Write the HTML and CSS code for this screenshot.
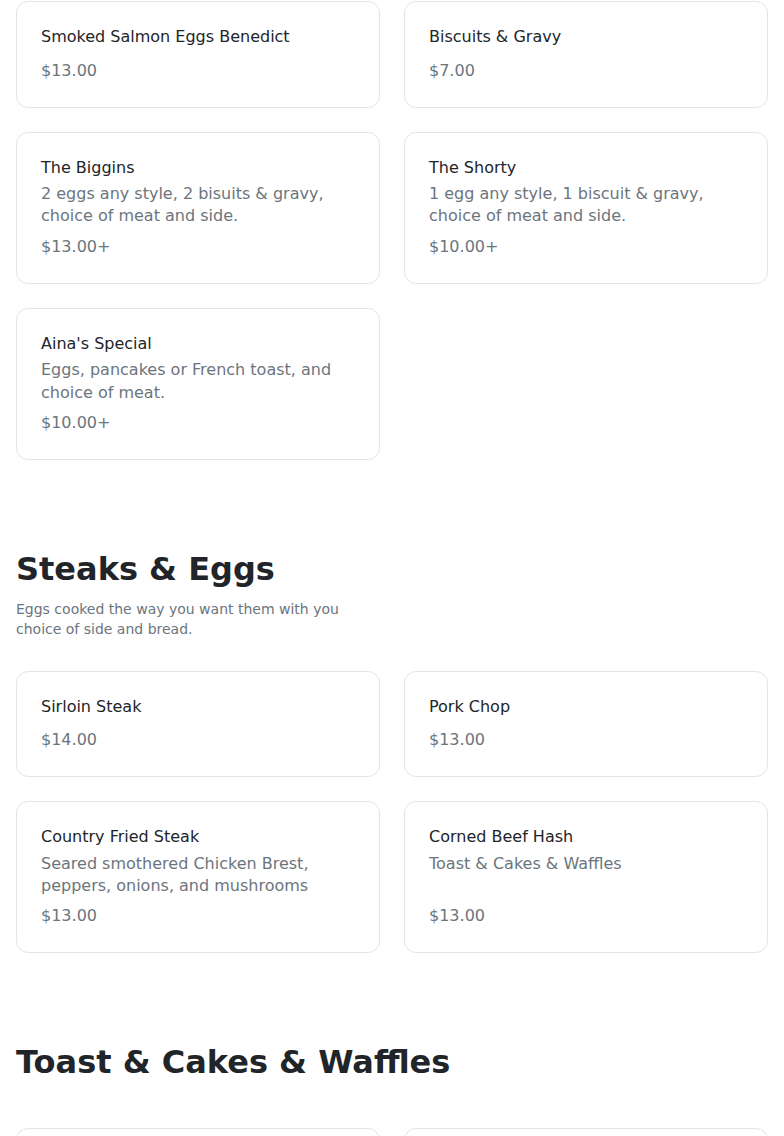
FILE: index.html
```html
<!DOCTYPE html>
<html lang="en">
<head>
    <meta charset="UTF-8">
    <meta name="viewport" content="width=device-width, initial-scale=1.0">
    <link rel="stylesheet" href="styles.css">
    <title>Menu</title>
</head>
<body>
    <div class="menu">
        <section class="section section-first">
            <div class="items">
                <div class="item">
                    <h5 class="item-name">Smoked Salmon Eggs Benedict</h5>
                    <p class="item-desc"></p>
                    <span class="item-price">$13.00</span>
                </div>
                <div class="item">
                    <h5 class="item-name">Biscuits &amp; Gravy</h5>
                    <p class="item-desc"></p>
                    <span class="item-price">$7.00</span>
                </div>
                <div class="item">
                    <h5 class="item-name">The Biggins</h5>
                    <p class="item-desc">2 eggs any style, 2 bisuits &amp; gravy, choice of meat and side.</p>
                    <span class="item-price">$13.00+</span>
                </div>
                <div class="item">
                    <h5 class="item-name">The Shorty</h5>
                    <p class="item-desc">1 egg any style, 1 biscuit &amp; gravy, choice of meat and side.</p>
                    <span class="item-price">$10.00+</span>
                </div>
                <div class="item">
                    <h5 class="item-name">Aina's Special</h5>
                    <p class="item-desc">Eggs, pancakes or French toast, and choice of meat.</p>
                    <span class="item-price">$10.00+</span>
                </div>
            </div>
        </section>

        <section class="section">
            <h2 class="section-title">Steaks &amp; Eggs</h2>
            <p class="section-desc">Eggs cooked the way you want them with you choice of side and bread.</p>
            <div class="items">
                <div class="item">
                    <h5 class="item-name">Sirloin Steak</h5>
                    <p class="item-desc"></p>
                    <span class="item-price">$14.00</span>
                </div>
                <div class="item">
                    <h5 class="item-name">Pork Chop</h5>
                    <p class="item-desc"></p>
                    <span class="item-price">$13.00</span>
                </div>
                <div class="item">
                    <h5 class="item-name">Country Fried Steak</h5>
                    <p class="item-desc">Seared smothered Chicken Brest, peppers, onions, and mushrooms</p>
                    <span class="item-price">$13.00</span>
                </div>
                <div class="item">
                    <h5 class="item-name">Corned Beef Hash</h5>
                    <p class="item-desc">Toast &amp; Cakes &amp; Waffles</p>
                    <span class="item-price">$13.00</span>
                </div>
            </div>
        </section>

        <section class="section">
            <h2 class="section-title">Toast &amp; Cakes &amp; Waffles</h2>
            <p class="section-desc"></p>
            <div class="items">
                <div class="item">
                    <h5 class="item-name">French Toast</h5>
                    <p class="item-desc"></p>
                    <span class="item-price">$9.00</span>
                </div>
                <div class="item">
                    <h5 class="item-name">Pancakes</h5>
                    <p class="item-desc"></p>
                    <span class="item-price">$8.00</span>
                </div>
            </div>
        </section>
    </div>
</body>
</html>
```

FILE: styles.css
```css
body {
    margin: 0;
    background-color: #fff;
    color: #212529;
    font-family: "DejaVu Sans", sans-serif;
    font-size: 16px;
}

.menu {
    padding: 1px 16px 40px;
}

.section {
    display: flex;
    flex-direction: column;
    padding-top: 90px;
}

.section-first {
    padding-top: 0;
}

.section-title {
    margin: 0 0 10px;
    font-size: 32px;
    font-weight: 700;
    line-height: 1.2;
    color: #212529;
}

.section-desc {
    max-width: 364px;
    margin: 0 0 32px;
    font-size: 14px;
    line-height: 20px;
    color: #6c757d;
}

.section-desc:empty {
    margin-bottom: 36px;
}

.items {
    display: grid;
    grid-template-columns: 1fr 1fr;
    gap: 24px;
}

.item {
    display: flex;
    flex-direction: column;
    border: 1px solid #e3e5e8;
    border-radius: 12px;
    padding: 24px;
    background-color: #fff;
}

.item-name {
    margin: 0;
    font-size: 16px;
    font-weight: 400;
    line-height: 21px;
    color: #212529;
}

.item-desc {
    margin: 5.5px 0 7px;
    line-height: 22.4px;
    color: #6c757d;
}

.item-desc:empty {
    margin: 5.5px 0 6px;
}

.item-price {
    margin-top: auto;
    line-height: 24px;
    color: #6c757d;
}
```
